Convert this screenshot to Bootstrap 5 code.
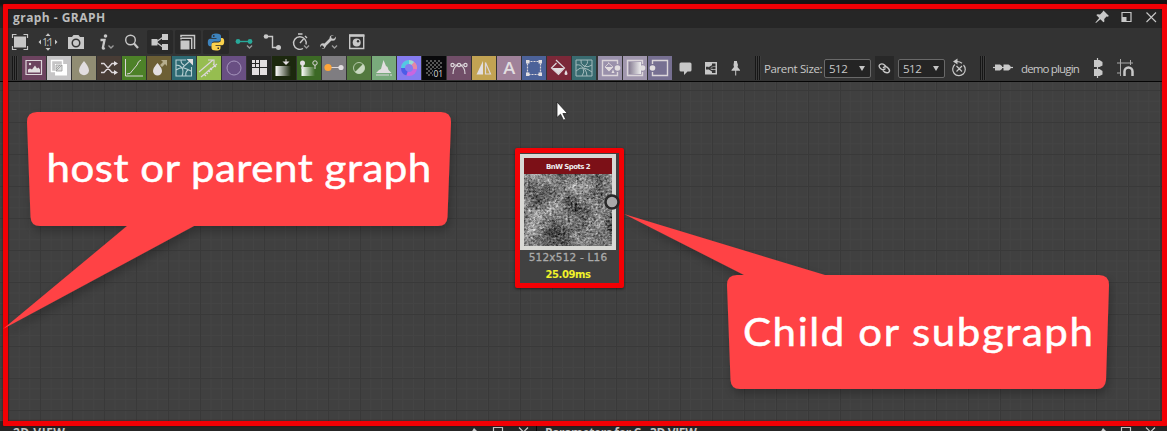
<!DOCTYPE html>
<html lang="en">
<head>
<meta charset="utf-8">
<title>graph - GRAPH</title>
<link href="https://cdn.jsdelivr.net/npm/bootstrap@5.3.0/dist/css/bootstrap.min.css" rel="stylesheet">
<script src="https://cdn.jsdelivr.net/npm/bootstrap@5.3.0/dist/js/bootstrap.bundle.min.js"></script>
<style>
body{width:1167px;height:431px;background:#2a2a2a;color:#c8c8c8;font:12px/16px "Open Sans","Noto Sans",sans-serif}
svg{display:block;flex:none;fill:none;stroke:#c8c8c8;stroke-width:1.4}
svg .f,.f{fill:#c8c8c8;stroke:none}
.panel-title{height:28px;padding:7px 3px 0 13px;background:linear-gradient(#151515 0 4px,#262626 8px)}
.panel-title b{font-weight:700;font-size:12px;line-height:21px;color:#bcbcbc;letter-spacing:.45px}
.tools{height:28px;padding-left:6px;background:#333}
.tool{width:28px;height:28px}
.pressed{background:#292929;width:26px;height:24px;margin:0 1px;border-radius:2px}
.pressed svg{margin-left:-1px}
.atoms{height:26px;background:#333;border-bottom:1px solid #050505;padding-left:12px}
.grip{width:6px;height:24px;background:repeating-linear-gradient(90deg,#161616 0 1px,#3c3c3c 1px 2px)}
.tile{width:24px;height:24px;margin-right:1px}
.tile svg{stroke:#dcd6da}
.tile .f{fill:#e2dee0}
.cell{width:25px}
.combo{width:47px;height:19px;border:1px solid #696969;border-radius:2px;background:#242424;padding:0 5px 0 4px;margin-top:3px;color:#c8c8c8}
.combo span{font-size:11.5px;line-height:17px;letter-spacing:-.5px}
.tri{border:3px solid transparent;border-top:5px solid #c4c4c4;border-bottom:0}
.bar-text{padding-top:5px;white-space:nowrap;font-size:11.5px}
.board{height:339px;background-color:#404040;background-image:
 linear-gradient(90deg,#393939 1px,transparent 1px),linear-gradient(#393939 1px,transparent 1px),
 linear-gradient(90deg,#444 1px,transparent 1px),linear-gradient(#444 1px,transparent 1px);
 background-size:32px 32px,32px 32px,10.667px 10.667px,10.667px 10.667px;background-position:8px 8px}
.node{left:515px;top:148px;width:109px;height:140px;border:5px solid #f40004;border-radius:2px;background:#414141;box-shadow:0 1px 3px #0008;font-family:"DejaVu Sans",sans-serif}
.thumb{width:96px;height:96px;border:4px solid #d9d9d5;margin:1px auto 0 0}
.thumb-name{height:16px;background:#7c1017;color:#eee;font-weight:700;font-size:7px;line-height:18px;letter-spacing:-.56px}
.size-line{font-size:10.5px;line-height:15px;color:#aaa;letter-spacing:.2px;-webkit-text-stroke:.3px #aaa}
.time-line{font-size:10px;line-height:19px;font-weight:700;color:#f2f22a;letter-spacing:-.4px}
.lower{height:10px;padding-top:6px;background:#252525;overflow:hidden}
.lower>div{height:20px;line-height:17px;font-weight:700;font-size:12px;color:#c4c4c4;padding:0 3px 0 13px;margin-top:-3px}
.over{left:0;top:0;pointer-events:none}
.frame{left:3px;top:4px;width:1164px;height:422px;border:5px solid #f20004;border-radius:1px;box-shadow:0 0 2px #400,inset 0 0 2px #400}
</style>
</head>
<body class="position-relative overflow-hidden d-flex flex-column">
<header class="panel-title d-flex justify-content-between">
  <b>graph - GRAPH</b>
  <div class="d-flex">
    <svg width="25" height="20" viewBox="0 0 25 20"><path class="f" transform="translate(-2 -.5)" d="M13.500 4l5.500 5.500-1.500.8-1-.2-2.300 2.300.2 2.500-1 .9-3-3L6 16.500l-.6-.6 3.800-4.400-2.900-2.900 1.200-.8 2.500.2 2.300-2.300z"/></svg>
    <svg width="25" height="20" viewBox="3 0 25 20" style="stroke-width:1.200"><path d="M8 5.500h9v9h-9z"/><path class="f" d="M8 10h4.500v4.500H8z"/></svg>
    <svg width="22" height="20" viewBox="0 0 22 20" style="stroke-width:1.1"><path d="M4.500 5.500l9.500 9.500m0-9.500l-9.500 9.500"/></svg>
  </div>
</header>
<div class="tools d-flex align-items-center">
  <svg class="tool" viewBox="0 0 28 28"><path class="f" d="M8 8.500h12v11H8z"/><path style="stroke-width:1.200" d="M6.500 10V6.500h4m7 0h4V10m0 8v3.500h-4m-7 0h-4V18"/></svg>
  <svg class="tool" viewBox="0 0 28 28"><path class="f" d="M11.500 8L14 5.200 16.500 8zM11.500 20l2.500 2.800 2.500-2.800zM7 11.500L4.500 14 7 16.500zM21 11.500l2.500 2.500-2.500 2.500z"/><text x="8.200" y="17.500" class="f" font-size="10" textLength="11">1:1</text></svg>
  <svg class="tool" viewBox="0 0 28 28"><path class="f" fill-rule="evenodd" d="M6 9h4l1.500-2h5L18 9h4v12H6zM14 10.500a4.500 4.500 0 100 9 4.500 4.500 0 000-9zm0 1.500a3 3 0 110 6 3 3 0 010-6z"/></svg>
  <svg class="tool" viewBox="0 0 28 28"><path d="M10.500 12h4l-1.700 8q0 1 2 0" style="stroke-width:2.300"/><circle class="f" cx="15.500" cy="8" r="1.800"/><path style="stroke:#999" d="M18.500 17.500l2.500 2.500 2.500-2.500"/></svg>
  <svg class="tool" viewBox="0 0 28 28"><circle cx="12.500" cy="12" r="4.800"/><path d="M16 15.500l4 4.500" style="stroke-width:2.200"/></svg>
  <div class="pressed"><svg width="28" height="24" viewBox="0 2 28 24"><path d="M18 8.500L10 14l8 6" style="stroke-width:1.200"/><path class="f" d="M5.500 11h6v6.500h-6zM16 6h6v6h-6zM16 16h6v6h-6z"/></svg></div>
  <div class="pressed"><svg width="28" height="24" viewBox="0 2 28 24"><path d="M7 9V7.500h13.500V21M7 11.500V10.300h10.700V21" style="stroke-width:1.500"/><path class="f" d="M6.500 12.500h9v9h-9z"/></svg></div>
  <div class="pressed"><svg width="28" height="24" viewBox="0 2 28 24" style="stroke:none"><path fill="#3d83bd" d="M14 5.500q-4.500 0-4.500 2.600V10h5v.8H8Q5.800 10.800 5.800 14.500T8 18.200h1.800V16q0-2.500 2.500-2.500H17q2-.2 2-2.300V8q0-2.500-5-2.500z"/><path fill="#fbd24c" d="M14 22.500q4.500 0 4.500-2.600V18h-5v-.8H20q2.200 0 2.200-3.700T20 9.900h-1V12q0 2.400-2.500 2.400H12q-2.500 0-2.500 2.400V20q0 2.500 4.500 2.500z"/><path fill="#282828" d="M11 7.300h1.500v1.500H11zM15.500 19.500H17V21h-1.500z"/></svg></div>
  <svg class="tool" viewBox="0 0 28 28"><path style="stroke:#28a99a" d="M8 13.500h12"/><circle cx="8" cy="13.500" r="2.400" fill="#28a99a" stroke="none"/><circle cx="20" cy="13.500" r="2.400" fill="#28a99a" stroke="none"/><path style="stroke:#999" d="M17 17.500l2.500 2.500 2.500-2.500"/></svg>
  <svg class="tool" viewBox="0 0 28 28"><path d="M8 8.500h6.500v11H20"/><circle class="f" cx="8" cy="8.500" r="2.300"/><circle class="f" cx="20.500" cy="19.500" r="2.500"/></svg>
  <svg class="tool" viewBox="0 0 28 28"><path d="M17 20.500a6.300 6.300 0 113-4" /><path d="M12 6h4.500M19 8l2 2M14 15l3.500-4"/><path style="stroke:#999" d="M18 17.500l2.500 2.500 2.500-2.500"/></svg>
  <svg class="tool" viewBox="0 0 28 28"><path d="M9.500 18.500l8-8" style="stroke-width:2.600"/><path d="M20 7l-2.800 1 .2 2.500 2.700.3 1.700-2.300q.6 4-3 4.300-3.300-.3-3.200-3Q16 6.500 20 7zM7.500 20.800l2.600-.8V17.800l-2.400-.5L6 19.200q0-3.700 3-3.900 3 .4 2.800 3-.6 3.200-4.300 2.500z" class="f"/><path style="stroke:#999" d="M18 17.500l2.500 2.500 2.500-2.500"/></svg>
  <svg class="tool" viewBox="0 0 28 28"><path d="M7.700 7.500h14v13h-14z"/><path style="stroke-width:2.500" d="M7 7.500h15.400"/><circle class="f" cx="14.700" cy="14.500" r="4"/><circle cx="16" cy="13.200" r="1.200" fill="#333" stroke="none"/></svg>
</div>
<div class="atoms d-flex">
  <div class="grip me-1"></div>
  <div class="tile" style="background:#6c435f"><svg viewBox="0 0 24 24"><path d="M4 4.500h15.500v14H4z" style="stroke-width:1.200"/><path class="f" d="M6 16.500v-3l2-1 2 1 3-4 2 3 1.500-1 1.500 2v3z"/><circle class="f" cx="8" cy="8" r="1.200"/></svg></div>
  <div class="tile" style="background:#c6c5c6"><svg viewBox="0 0 24 24"><path style="stroke:#fff" d="M4.500 4.500h11v11h-11z"/><path fill="#fff" stroke="none" d="M8 8h12v11.500H8z"/><path fill="#ddd" style="stroke:#999;stroke-width:.8" d="M9 9h6v6H9zM9 13l4-4m-4 6l6-6"/></svg></div>
  <div class="tile" style="background:#918d73"><svg viewBox="0 0 24 24"><path class="f" d="M12 5q5 6 5 9.200a5 5 0 01-10 0Q7 11 12 5z"/></svg></div>
  <div class="tile" style="background:#483c35"><svg viewBox="0 0 24 24"><path d="M4 7.500h3l8 9h4M4 16.500h3l8-9h4" style="stroke-width:1.300"/><path class="f" d="M17 5l4 2.500-4 2.500zM17 14l4 2.500-4 2.500z"/></svg></div>
  <div class="tile" style="background:#4d8128"><svg viewBox="0 0 24 24" style="stroke-width:1"><path d="M3.500 3v17H21M5 18q4 0 5-3l5-6q1-4 4-5"/></svg></div>
  <div class="tile" style="background:#6d5f35"><svg viewBox="0 0 24 24"><path class="f" d="M10.500 7q4.500 5 4.500 8a4.500 4.500 0 01-9 0q0-3 4.500-8z"/><path d="M14 4h6v6l-2-2-3 3-2-2 3-3z" fill="#b5ac8c" stroke="none"/></svg></div>
  <div class="tile" style="background:#2d6972"><svg viewBox="0 0 24 24" style="stroke-width:1.100;stroke:#b9d0d3"><path d="M14 4H4v16h15.500V11M4 9q4 0 6 3t0 8M9 4q0 4 3 5M4 14q5-3 8-2t7 3M14 20q-1-4 2-6M11 11l7-6"/><path class="f" d="M14.500 3H21v6.500z"/></svg></div>
  <div class="tile" style="background:#96bd50"><svg viewBox="0 0 24 24" style="stroke-width:1.100"><path d="M2 16L16 4m-5 0h6v5M4 21L20 8M7 18l2 2m0-4l2 2m0-4l2 2m0-4l2 2m1-6l3 3"/></svg></div>
  <div class="tile" style="background:#694f83"><svg viewBox="0 0 24 24" style="stroke:#a695bd;stroke-width:1"><circle cx="12" cy="12" r="7"/></svg></div>
  <div class="tile" style="background:#272727"><svg viewBox="0 0 24 24"><path class="f" d="M5 4h3v3H5zM9 4h3v3H9zM5 8h3v3H5zM9 8h3v3H9zM13 4h7v7h-7zM5 12h7v7H5zM13 12h7v7h-7z"/></svg></div>
  <div class="tile" style="background:#1c280e"><svg viewBox="0 0 24 24"><path fill="url(#fade)" stroke="none" d="M3.500 10H19v10H3.500z"/><path d="M14 3v4" style="stroke-width:1"/><path class="f" d="M10.500 5.500h7L14 9z"/></svg></div>
  <div class="tile" style="background:#3c6925"><svg viewBox="0 0 24 24"><path fill="url(#fade)" stroke="none" d="M4.500 11H18v9H4.500z"/><circle class="f" cx="5.500" cy="7" r="2.500"/><path class="f" d="M4.500 9h2v4h-2z"/><circle cx="18" cy="7" r="2.200" style="stroke-width:1"/><path d="M18 9v4" style="stroke-width:1"/></svg></div>
  <div class="tile" style="background:#7f7d81"><svg viewBox="0 0 24 24"><path d="M7 11.500h12" style="stroke-width:1"/><circle cx="6" cy="11.500" r="3.600" fill="#ffa538" stroke="none"/><circle class="f" cx="19" cy="11.500" r="2.600"/></svg></div>
  <div class="tile" style="background:#53793f"><svg viewBox="0 0 24 24" style="stroke-width:1;stroke:#b5c9aa"><circle cx="12" cy="12" r="5.500"/><path fill="#c9d8c0" stroke="none" d="M16 8a5.500 5.500 0 01-8 8z"/></svg></div>
  <div class="tile" style="background:#79aa7c"><svg viewBox="0 0 24 24"><path class="f" d="M4 17l3-3 2-1 2.500-9L14 10l1.500 1 1 3 3 3z"/><path d="M4 19h16" style="stroke-width:1" stroke-dasharray="13 1"/></svg></div>
  <div class="tile" style="background:#857cf0"><svg viewBox="0 0 24 24" style="stroke-width:4"><circle cx="12" cy="12" r="6" style="stroke:#c966df"/><path style="stroke:#52c9e3" d="M6 12a6 6 0 016-6"/><path style="stroke:#9bdbcf" d="M12 6a6 6 0 014 1.500"/><path style="stroke:#e488a5" d="M16 7.500A6 6 0 0118 13"/><path style="stroke:#4b5de8" d="M10 17.700A6 6 0 016 12"/></svg></div>
  <div class="tile" style="background:#09090b"><svg viewBox="0 0 24 24"><path fill="url(#chk)" stroke="none" d="M4 4h16v9H11v7H4z"/><text x="11.500" y="20.500" font-size="8.500" fill="#ddd" stroke="none">01</text></svg></div>
  <div class="tile" style="background:#714e68"><svg viewBox="0 0 24 24" style="stroke-width:1.200"><path d="M4 9h16M6 18q0-8 6-9 6 1 6 9"/><circle cx="5.500" cy="9" r="1.600" fill="#714e68"/><circle cx="12" cy="9" r="1.600" fill="#714e68"/><circle cx="18.500" cy="9" r="1.600" fill="#714e68"/></svg></div>
  <div class="tile" style="background:#c2a353"><svg viewBox="0 0 24 24" style="stroke-width:1.200"><path class="f" d="M11 5v13.500H4.500z"/><path d="M13.500 6.500v11.500h5z"/></svg></div>
  <div class="tile" style="background:#a0829a"><svg viewBox="0 0 24 24"><text class="f" x="6.200" y="18" font-size="16.500" font-weight="600" textLength="12" lengthAdjust="spacingAndGlyphs">A</text></svg></div>
  <div class="tile" style="background:#4c6299"><svg viewBox="0 0 24 24"><path style="stroke-width:1.200" stroke-dasharray="2 1" d="M5.500 5.500h13v13h-13z"/><path class="f" d="M4 4h3.500v3.500H4zM16.500 4H20v3.500h-3.500zM4 16.500h3.500V20H4zM16.500 16.500H20V20h-3.500z"/></svg></div>
  <div class="tile" style="background:#7b2838"><svg viewBox="0 0 24 24" style="stroke-width:1.200"><path d="M9 4l8.500 8-6 6.500L4.500 12l5-5"/><path class="f" d="M5 12h12l-5.500 6zM19 14q3 5 0 5t0-5z"/></svg></div>
  <div class="tile" style="background:#396b70"><svg viewBox="0 0 24 24" style="stroke-width:1;stroke:#a3babb"><path d="M4 4h16v16H4zM4 9q5-1 7 3t-1 8M9 4q-1 4 3 6t8-1M4 15q4-4 8-3t8 4M15 4q2 3-3 7M15 20q0-4-3-8"/></svg></div>
  <div class="tile" style="background:#9a91ab;margin-left:1px"><svg viewBox="0 0 24 24"><path d="M19.500 8V4.500H4.500v15h15V16"/><circle class="f" cx="19.500" cy="12" r="2.800"/><path class="f" d="M7 11h8l-4 4.500zM15 13.500l1.500 3.500h-3z"/><path d="M10 6.500l5 4.500-4 4-4-4 4-4" style="stroke-width:.9"/></svg></div>
  <div class="tile" style="background:#a197ae"><svg viewBox="0 0 24 24"><path d="M19.500 8V4.500h-15v15h15V16"/><path fill="url(#fade2)" stroke="none" d="M6 6h12v12H6z"/><circle class="f" cx="19.500" cy="12" r="2.800"/></svg></div>
  <div class="tile" style="background:#777092"><svg viewBox="0 0 24 24"><path d="M4.500 8V4.500h15v15h-15V16"/><circle class="f" cx="4.500" cy="12" r="2.800"/></svg></div>
  <div class="cell"><svg viewBox="0 0 25 25"><path class="f" d="M8 6.500h9q1.500 0 1.500 1.500v6q0 1.500-1.500 1.500h-2.500L11 19v-3.500H8Q6.500 15.500 6.500 14V8Q6.500 6.500 8 6.500z"/></svg></div>
  <div class="cell"><svg viewBox="0 0 25 25"><path class="f" d="M7 6h12v12.500H7z"/><path style="stroke:#333;stroke-width:1.200" d="M8 12.200h9M10 12.200l5-3M10 12.200l5 3.200"/><path fill="#333" stroke="none" d="M14 7.500h3.500v3H14zM14 14h3.500v3H14zM14.500 11h3v2.300h-3zM8 10.800h2.500v2.800H8z"/></svg></div>
  <div class="cell"><svg viewBox="0 0 25 25"><path class="f" d="M11 5h3v1l1 3-.5 2 2.500 3v.8H8.500V14l2.500-3-.5-2 .5-3zM12.200 14h1v5.500h-1z"/></svg></div>
  <div class="grip" style="margin-left:7px"></div>
  <div class="bar-text" style="width:63px;padding-left:3px;letter-spacing:-.38px">Parent Size:</div>
  <div class="combo d-flex align-items-center justify-content-between"><span>512</span><i class="tri"></i></div>
  <div style="width:19px;height:24px;margin:0 4px;background:#282828"><svg width="19" height="24" viewBox="0 0 19 24"><path d="M10.500 12.500Q8 15 5.500 12.500T5 8.500t4.500.5L11 10.500M8 12Q10.500 9.500 13 12t1 4-4.500 0L8 14.500"/></svg></div>
  <div class="combo d-flex align-items-center justify-content-between"><span>512</span><i class="tri"></i></div>
  <svg width="29" height="25" viewBox="0 0 29 25" style="stroke-width:1.200"><path d="M10 8.500a6.300 6.300 0 108.500.5M17 7.200q-2-1.700-5-1.700M11.500 10l5.500 5.500m0-5.500l-5.500 5.500"/><path class="f" d="M12.500 2.500v6L8 5.500z"/></svg>
  <div class="grip" style="margin-left:6px"></div>
  <svg width="34" height="25" viewBox="0 0 34 25"><path d="M7 11.500h20" style="stroke-width:1.200"/><path class="f" d="M9 8.500h5l2 1.500v3l-2 1.500H9zM17.500 8.500h5l2 1.500v3l-2 1.500h-5z"/></svg>
  <div class="bar-text" style="width:61px;padding-left:1px;letter-spacing:-.85px">demo plugin</div>
  <svg width="30" height="25" viewBox="0 0 30 25"><path d="M16.500 2v20" style="stroke-width:1.200"/><path class="f" d="M13 4h5.500l3 2v3.500l-3 1.500H13zM13 13h5.500l3 2v3.500l-3 1.500H13z"/></svg>
  <svg width="28" height="25" viewBox="0 0 28 25"><path d="M6 7h16M6 17h4M9.500 3v17M19.500 4v5" style="stroke-width:1;stroke:#aaa"/><path d="M13.500 20v-4.500a4 4 0 018 0V20" style="stroke-width:2.500"/></svg>
</div>
<main class="board"></main>
<footer class="lower d-flex">
  <div class="d-flex justify-content-between" style="width:537px;border-right:1px solid #080808"><span style="letter-spacing:.5px">2D VIEW</span>
    <svg width="70" height="18" viewBox="0 0 70 18" style="stroke-width:1.200"><path class="f" d="M11 4l5 5-4 4-4-4z"/><path d="M30.500 3.500h9v9h-9zM56 3.500l9 9m0-9l-9 9"/></svg></div>
  <div class="d-flex justify-content-between flex-grow-1" style="padding-left:8px"><span style="letter-spacing:-.35px">Parameters for C - 3D VIEW</span>
    <svg width="70" height="18" viewBox="0 0 70 18" style="stroke-width:1.200"><path class="f" d="M9 4l5 5-4 4-4-4z"/><path d="M27.500 3.500h9v9h-9zM52 3.500l9 9m0-9l-9 9"/></svg></div>
</footer>
<div class="position-absolute frame"></div>
<section class="position-absolute node text-center">
  <div class="thumb">
    <div class="thumb-name">BnW Spots 2</div>
    <svg width="88" height="72"><rect width="88" height="72" stroke="none" filter="url(#spots)"/></svg>
  </div>
  <div class="size-line text-nowrap" style="margin-left:-3px">512x512 - L16</div>
  <div class="time-line" style="margin-left:-3px">25.09ms</div>
</section>
<svg class="position-absolute over" width="1167" height="431" viewBox="0 0 1167 431" style="stroke:none">
  <defs>
    <linearGradient id="fade"><stop stop-color="#fff"/><stop offset="1" stop-color="#fff" stop-opacity="0"/></linearGradient>
    <linearGradient id="fade2"><stop stop-color="#887f94"/><stop offset="1" stop-color="#eee"/></linearGradient>
    <pattern id="chk" width="4" height="4" patternUnits="userSpaceOnUse"><path fill="#555" stroke="none" d="M0 0h2v2H0zM2 2h2v2H2z"/></pattern>
    <filter id="spots" x="0" y="0" width="100%" height="100%" color-interpolation-filters="sRGB">
      <feTurbulence type="fractalNoise" baseFrequency=".037 .041" numOctaves="5" seed="7" result="a"/>
      <feColorMatrix in="a" values="1 0 0 0 0 1 0 0 0 0 1 0 0 0 0 0 0 0 0 1" result="c"/>
      <feTurbulence type="fractalNoise" baseFrequency=".43 .47" numOctaves="3" seed="11" result="b"/>
      <feColorMatrix in="b" values=".5 .5 0 0 0 .5 .5 0 0 0 .5 .5 0 0 0 0 0 0 0 1" result="d"/>
      <feComposite in="c" in2="d" operator="arithmetic" k2=".8" k3="1.1" k4="-.5"/>
      <feColorMatrix values="1 0 0 0 0 0 1 0 0 0 0 0 1 0 0 0 0 0 0 1"/>
    </filter>
    <filter id="shade" x="-10%" y="-10%" width="120%" height="130%"><feDropShadow dx="2" dy="5" stdDeviation="5" flood-color="#000" flood-opacity=".25"/></filter>
  </defs>
  <circle cx="612" cy="202" r="6.500" fill="#aaa" stroke="#292929" stroke-width="2.500"/>
  <path d="M557 102v15.500l3.500-3.300 3 6 2.200-1-2.800-5.700h4.600z" fill="#fff" stroke="#222" stroke-width=".8"/>
  <g fill="#ff4244" filter="url(#shade)">
    <path d="M37 112H441Q451 112 451 122L447.500 217Q447 226 438 226H194L3 329 127 226H40Q31 226 30.500 217L27 122Q27 112 37 112Z"/>
    <path d="M737 275H744L624 214 825 275H1099Q1109 275 1109 285L1106 380Q1105 389 1097 389H740Q731 389 730.500 380L727 285Q727 275 737 275Z"/>
  </g>
  <g fill="#fff" stroke="#fff" stroke-width=".5" font-family="Lato, sans-serif" font-size="38.500">
    <text transform="translate(46.500 182) scale(1.090 1)" textLength="353" lengthAdjust="spacing">host or parent graph</text>
    <text transform="translate(743 346) scale(1.090 1)" textLength="321" lengthAdjust="spacing">Child or subgraph</text>
  </g>
</svg>
</body>
</html>
